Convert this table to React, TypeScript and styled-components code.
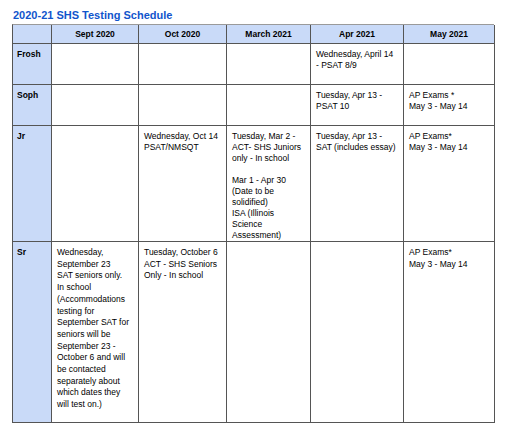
import styled, { createGlobalStyle } from "styled-components";
import { Fragment } from "react";

const GlobalStyle = createGlobalStyle`
  html, body {
    margin: 0;
    padding: 0;
    background: #ffffff;
  }
  body {
    font-family: "Liberation Sans", Arial, sans-serif;
    color: #000000;
  }
`;

const months = ["Sept 2020", "Oct 2020", "March 2021", "Apr 2021", "May 2021"];

// each cell is a list of lines, "" makes an empty line
const rows: { label: string; loose?: boolean; cells: string[][] }[] = [
  {
    label: "Frosh",
    cells: [[], [], [], ["Wednesday, April 14", "- PSAT 8/9"], []],
  },
  {
    label: "Soph",
    cells: [[], [], [], ["Tuesday, Apr 13 -", "PSAT 10"], ["AP Exams *", "May 3 - May 14"]],
  },
  {
    label: "Jr",
    cells: [
      [],
      ["Wednesday, Oct 14", "PSAT/NMSQT"],
      [
        "Tuesday, Mar 2 -",
        "ACT-  SHS Juniors",
        "only - In school",
        "",
        "Mar 1 - Apr 30",
        "(Date to be",
        "solidified)",
        "ISA (Illinois",
        "Science",
        "Assessment)",
      ],
      ["Tuesday, Apr 13 -", "SAT (includes essay)"],
      ["AP Exams*", "May 3 - May 14"],
    ],
  },
  {
    label: "Sr",
    loose: true,
    cells: [
      [
        "Wednesday,",
        "September 23",
        "SAT seniors only.",
        "In school",
        "(Accommodations",
        "testing for",
        "September SAT for",
        "seniors will be",
        "September 23 -",
        "October 6 and will",
        "be contacted",
        "separately about",
        "which dates they",
        "will test on.)",
      ],
      ["Tuesday, October 6", "ACT - SHS Seniors", "Only - In school"],
      [],
      [],
      ["AP Exams*", "May 3 - May 14"],
    ],
  },
];

const App = () => {
  return (
    <>
      <GlobalStyle />
      <Page>
        <Title>2020-21 SHS Testing Schedule</Title>
        <Schedule>
          <HeaderCell />
          {months.map((m) => (
            <HeaderCell key={m}>{m}</HeaderCell>
          ))}
          {rows.map((row) => (
            <Fragment key={row.label}>
              <LabelCell>{row.label}</LabelCell>
              {row.cells.map((lines, i) => (
                <Cell key={i} $loose={row.loose}>
                  {lines.map((line, j) =>
                    line === "" ? <Gap key={j} /> : <Line key={j}>{line}</Line>
                  )}
                </Cell>
              ))}
            </Fragment>
          ))}
        </Schedule>
      </Page>
    </>
  );
};

export default App;

const Page = styled.div`
  width: 512px;
  height: 432px;
  padding: 9px 0 0 12px;
  box-sizing: border-box;
  overflow: hidden;
`;

const Title = styled.h1`
  margin: 0 0 2px 1px;
  font-size: 11px;
  line-height: 13px;
  font-weight: 700;
  color: #1155cc;
`;

const Schedule = styled.div`
  display: grid;
  grid-template-columns: 39px 87px 88px 84px 93px 91px;
  grid-template-rows: 19px 41px 41px 116px 181px;
  width: 482px;
  border-top: 1px solid #9a9a9a;
  border-left: 1px solid #555555;
  box-sizing: border-box;
  font-size: 8.5px;
  line-height: 11px;
`;

const Cell = styled.div<{ $loose?: boolean }>`
  padding: 5px 5px;
  border-right: 1px solid #555555;
  border-bottom: 1px solid #555555;
  box-sizing: border-box;
  min-width: 0;
  line-height: ${(p) => (p.$loose ? "11.7px" : "11px")};
`;

const HeaderCell = styled(Cell)`
  background: #c9daf8;
  font-weight: 700;
  text-align: center;
  padding-top: 4px;
`;

const LabelCell = styled(Cell)`
  background: #c9daf8;
  font-weight: 700;
  padding-left: 4px;
`;

const Line = styled.div`
  white-space: nowrap;
`;

const Gap = styled.div`
  height: 11px;
`;
